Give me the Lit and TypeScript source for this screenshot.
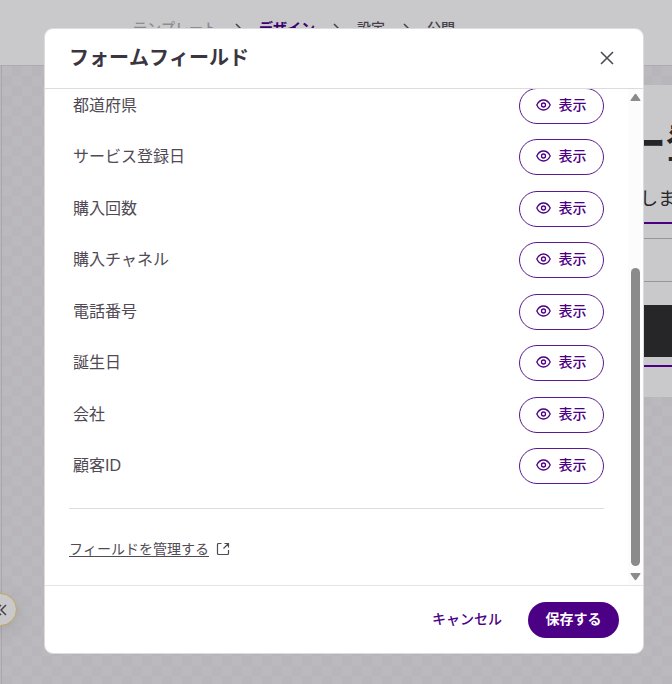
import { LitElement, html, css, svg } from "lit";
import { customElement, property } from "lit/decorators.js";

const FIELDS = ["都道府県", "サービス登録日", "購入回数", "購入チャネル", "電話番号", "誕生日", "会社", "顧客ID"];

const STEPS = [
  { label: "テンプレート", state: "done" },
  { label: "デザイン", state: "current" },
  { label: "設定", state: "next" },
  { label: "公開", state: "next" },
];

const chevron = svg`<svg class="chevron" viewBox="0 0 6 10" width="6" height="10" aria-hidden="true"><path d="M1 1l4 4-4 4" fill="none" stroke="currentColor" stroke-width="1.5"/></svg>`;

@customElement("field-row")
class FieldRow extends LitElement {
  @property() label = "";

  static styles = css`
    :host {
      display: flex;
      justify-content: space-between;
      align-items: center;
      padding-left: 4px;
    }
    .name {
      font-size: 16px;
      line-height: 24px;
      color: #504a54;
    }
    .show {
      box-sizing: border-box;
      display: flex;
      align-items: center;
      justify-content: center;
      gap: 8px;
      width: 85px;
      height: 36px;
      padding: 0 1px 2px 0;
      border: 1px solid #5a1a90;
      border-radius: 18px;
      background: #fff;
      color: #4c0085;
      font: inherit;
      font-size: 14px;
      line-height: 20px;
      font-weight: 500;
    }
  `;

  render() {
    return html`
      <span class="name" id="name">${this.label}</span>
      <button class="show" type="button" aria-describedby="name">
        <svg viewBox="0 0 15 12" width="15" height="12" fill="none" stroke="currentColor" stroke-width="1.3" aria-hidden="true">
          <path d="M.8 6C2.200 3 4.600 1 7.500 1s5.300 2 6.700 5c-1.400 3-3.800 5-6.700 5S2.200 9 .8 6z" />
          <circle cx="7.5" cy="6" r="2" />
        </svg>
        <span>表示</span>
      </button>
    `;
  }
}

@customElement("app-root")
class AppRoot extends LitElement {
  static styles = css`
    :host {
      display: block;
      position: relative;
      min-height: 100vh;
      overflow: hidden;
      font-family: "Liberation Sans", "Noto Sans CJK JP", sans-serif;
      font-kerning: none;
      background: #bab8bd;
    }
    * {
      box-sizing: border-box;
    }
    .page {
      display: flex;
      flex-direction: column;
      height: 100vh;
    }
    .steps {
      display: flex;
      flex: none;
      gap: 18px;
      height: 66px;
      margin: 0;
      padding: 18px 0 0 133px;
      list-style: none;
      background: #c9c9cb;
      border-bottom: 1px solid #adabb0;
    }
    .step {
      display: flex;
      align-items: center;
      gap: 18px;
      height: 20px;
      font-size: 14px;
      line-height: 20px;
      font-weight: 500;
      color: #46404a;
    }
    .done {
      color: #8d8b90;
    }
    .current {
      font-weight: 700;
      color: #3d0070;
    }
    .chevron {
      color: #46404a;
    }
    .canvas {
      flex: 1;
      display: flex;
      justify-content: flex-end;
      align-items: flex-start;
      padding-top: 19px;
      margin-left: 1px;
      border-left: 1px solid #a9a7ad;
      background: repeating-conic-gradient(#b8b6bb 0 25%, #bab9bd 0 50%) 0 0 / 20px 20px;
    }
    .preview {
      width: 40px;
      height: 312px;
      overflow: hidden;
      background: #c9c9cb;
      white-space: nowrap;
      color: #262628;
    }
    .heading {
      height: 96px;
      margin: 0;
      padding-top: 35px;
      font-size: 40px;
      line-height: 48px;
      font-weight: 700;
      text-indent: -6px;
    }
    .lead {
      margin: 0;
      height: 41px;
      font-size: 18px;
      line-height: 36px;
      text-indent: 8px;
    }
    .form {
      height: 145px;
      border-top: 2px solid #4a0080;
      border-bottom: 2px solid #4a0080;
      padding-top: 14px;
    }
    .entry {
      display: block;
      width: 100%;
      height: 44px;
      padding: 0;
      border: 1px solid #98969b;
      border-width: 1px 0;
      background: transparent;
    }
    .submit {
      display: block;
      width: 100%;
      height: 52px;
      margin-top: 23px;
      border: 0;
      background: #262628;
    }
    .collapse {
      position: absolute;
      left: -16px;
      bottom: 58px;
      display: flex;
      align-items: center;
      justify-content: center;
      width: 33px;
      height: 33px;
      padding: 0;
      border: 1px solid #c4a658;
      border-radius: 50%;
      background: #c9c9cb;
      color: #46404a;
      box-shadow: 0 4px 16px #8886;
    }
    .dialog {
      position: absolute;
      inset: 28px 28px 30px 44px;
      display: flex;
      flex-direction: column;
      overflow: hidden;
      border: 1px solid #dcdbde;
      border-radius: 9px;
      background: #fff;
    }
    .head {
      flex: none;
      display: flex;
      justify-content: space-between;
      align-items: center;
      height: 60px;
      padding: 0 29px 2px 24px;
      border-bottom: 1px solid #dcdbde;
    }
    .title {
      margin: 0;
      font-size: 20px;
      line-height: 28px;
      font-weight: 700;
      color: #3b353f;
    }
    .close {
      display: flex;
      padding: 0;
      border: 0;
      background: none;
      color: #504a54;
    }
    .body {
      flex: 1;
      min-height: 0;
      display: flex;
      overflow: hidden;
    }
    .content {
      flex: 1;
      display: flex;
      flex-direction: column;
      padding: 0 24px;
    }
    .fields {
      flex: 1;
      display: flex;
      flex-direction: column;
      justify-content: space-between;
      margin-top: -1px;
    }
    .manage {
      flex: none;
      height: 77px;
      margin-top: 24px;
      padding-top: 30px;
      border-top: 1px solid #dcdbde;
      font-size: 14px;
      line-height: 20px;
    }
    .link {
      display: inline-flex;
      align-items: center;
      gap: 7px;
      color: #504a54;
      text-decoration: none;
    }
    .linktext {
      text-decoration: underline;
      text-underline-offset: 2px;
    }
    .scrollbar {
      flex: none;
      display: flex;
      flex-direction: column;
      align-items: center;
      width: 15px;
      padding: 4px 0;
      background: #fcfcfc;
      color: #8b8b8b;
    }
    .thumb {
      width: 9px;
      height: 61%;
      margin: auto 0 6px;
      border-radius: 5px;
      background: #8b8b8b;
    }
    .foot {
      flex: none;
      display: flex;
      justify-content: flex-end;
      align-items: center;
      gap: 26px;
      height: 68px;
      padding: 0 24px;
      border-top: 1px solid #e4e3e6;
    }
    .cancel,
    .save {
      height: 36px;
      padding: 0 0 2px;
      border: 0;
      border-radius: 18px;
      background: none;
      color: #4c0085;
      font: inherit;
      font-size: 14px;
      line-height: 20px;
      font-weight: 500;
    }
    .save {
      width: 91px;
      background: #4c0085;
      color: #fff;
      font-weight: 700;
    }
  `;

  render() {
    return html`
      <div class="page">
        <ol class="steps">
          ${STEPS.map(
            (s, i) => html`<li class="step">
              ${i ? chevron : ""}<span class=${s.state}>${s.label}</span>
            </li>`
          )}
        </ol>
        <div class="canvas">
          <div class="preview">
            <h1 class="heading">ー登</h1>
            <p class="lead">しま</p>
            <div class="form">
              <input class="entry" aria-label="メール" />
              <button class="submit" type="button" aria-label="登録"></button>
            </div>
          </div>
        </div>
      </div>
      <button class="collapse" type="button" aria-label="折りたたむ">
        <svg viewBox="0 0 12 12" width="12" height="12" fill="none" stroke="currentColor" stroke-width="1.500" aria-hidden="true">
          <path d="M6 1L1 6l5 5M11 1L6 6l5 5" />
        </svg>
      </button>
      <section class="dialog" role="dialog" aria-modal="true" aria-labelledby="title">
        <header class="head">
          <h2 class="title" id="title">フォームフィールド</h2>
          <button class="close" type="button" aria-label="閉じる">
            <svg viewBox="0 0 14 14" width="14" height="14" fill="none" stroke="currentColor" stroke-width="1.600" aria-hidden="true">
              <path d="M1 1l12 12M13 1L1 13" />
            </svg>
          </button>
        </header>
        <div class="body">
          <div class="content">
            <div class="fields">${FIELDS.map((f) => html`<field-row label=${f}></field-row>`)}</div>
            <div class="manage">
              <a class="link" href="#">
                <span class="linktext">フィールドを管理する</span>
                <svg viewBox="0 0 14 14" width="14" height="14" fill="none" stroke="currentColor" stroke-width="1.200" aria-hidden="true">
                  <path d="M5.500 1.500H2.500a1 1 0 0 0-1 1v9a1 1 0 0 0 1 1h9a1 1 0 0 0 1-1V8M8.500 1.500h4V5.500M12.500 1.500L7.500 6.500" />
                </svg>
              </a>
            </div>
          </div>
          <div class="scrollbar" aria-hidden="true">
            <svg viewBox="0 0 11 9" width="11" height="9"><path d="M4.700 1.200L.6 7q-.4 1 .6 1h8.600q1 0 .6-1L6.300 1.200q-.8-.9-1.600 0z" fill="currentColor" /></svg>
            <div class="thumb"></div>
            <svg viewBox="0 0 11 9" width="11" height="9"><path d="M4.700 7.800L.6 2q-.4-1 .6-1h8.600q1 0 .6 1L6.300 7.800q-.8.9-1.600 0z" fill="currentColor" /></svg>
          </div>
        </div>
        <footer class="foot">
          <button class="cancel" type="button">キャンセル</button>
          <button class="save" type="button">保存する</button>
        </footer>
      </section>
    `;
  }
}
